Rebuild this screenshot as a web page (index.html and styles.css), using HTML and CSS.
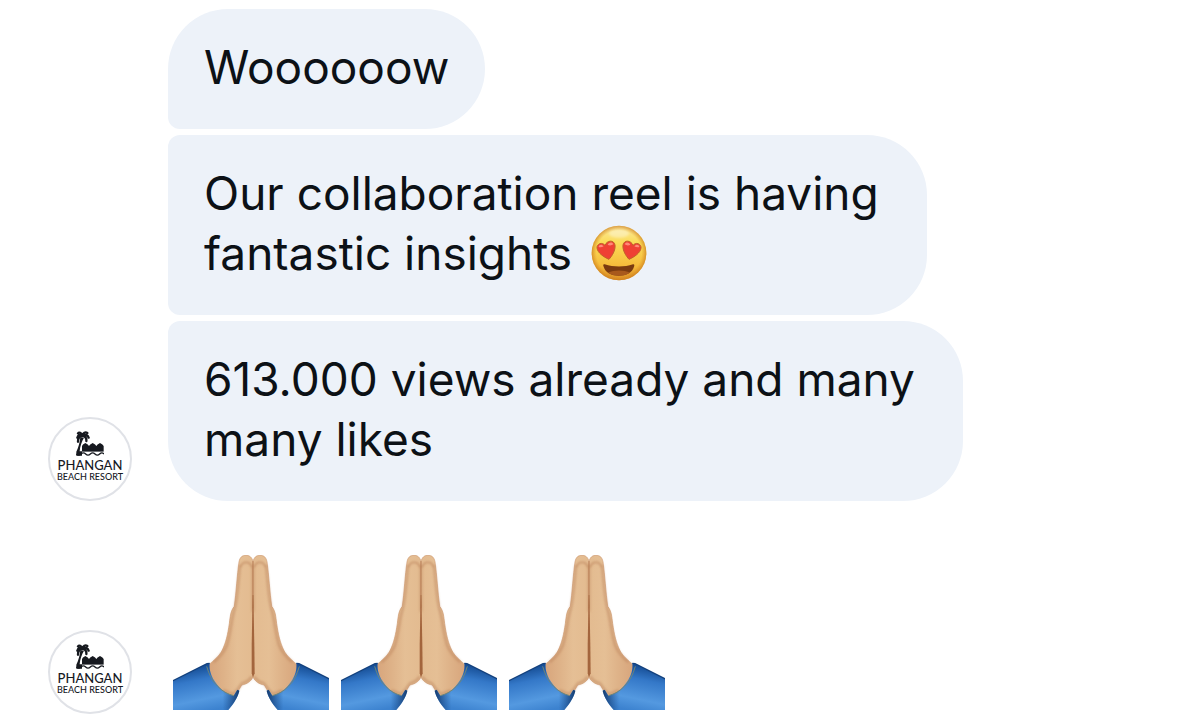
FILE: index.html
```html
<!DOCTYPE html>
<html lang="en">
<head>
  <meta charset="UTF-8">
  <meta name="viewport" content="width=device-width, initial-scale=1">
  <title>Phangan Beach Resort</title>
  <link rel="stylesheet" href="styles.css">
</head>
<body>

<svg class="defs" aria-hidden="true">
  <defs>
    <linearGradient id="face" x1="0" y1="0" x2="0" y2="1">
      <stop offset="0" stop-color="#fbe9a0"></stop>
      <stop offset=".3" stop-color="#fbdc59"></stop>
      <stop offset=".72" stop-color="#f6bd3c"></stop>
      <stop offset="1" stop-color="#dc9026"></stop>
    </linearGradient>
    <radialGradient id="rim">
      <stop offset=".82" stop-color="#d98a20" stop-opacity="0"></stop>
      <stop offset="1" stop-color="#c97a1c" stop-opacity=".7"></stop>
    </radialGradient>
    <linearGradient id="skin" x1="0" y1="0" x2="1" y2="0">
      <stop offset="0" stop-color="#d7a47b"></stop>
      <stop offset=".35" stop-color="#deb288"></stop>
      <stop offset=".65" stop-color="#e5bf95"></stop>
      <stop offset="1" stop-color="#e3bb90"></stop>
    </linearGradient>
    <linearGradient id="sleeve" x1=".3" y1="0" x2=".6" y2="1">
      <stop offset=".1" stop-color="#174f97"></stop>
      <stop offset=".35" stop-color="#3478c8"></stop>
      <stop offset=".75" stop-color="#5499e0"></stop>
      <stop offset="1" stop-color="#3c82cf"></stop>
    </linearGradient>
    <linearGradient id="cuff" x1="0" y1="0" x2="1" y2="0">
      <stop offset=".75" stop-color="#123f7c" stop-opacity="0"></stop>
      <stop offset="1" stop-color="#0d2f60" stop-opacity=".9"></stop>
    </linearGradient>
    <filter id="soft" x="-50%" y="-50%" width="200%" height="200%">
      <feGaussianBlur stdDeviation="3"></feGaussianBlur>
    </filter>

    <g id="hand">
      <path fill="url(#skin)" stroke="#cf9c72" stroke-width="2" d="M264 50C261 36 253 31 243 31C231 31 225 37 222 50C216 93 214 140 208 184C196 199 196 213 193 236C188 270 183 291 172 315C163 333 150 343 128 362L136 395L172 441L205 454L222 434L230 420C246 417 257 410 264 396Z"></path>
      <g fill="none" stroke="#b97f56" filter="url(#soft)">
        <path stroke-width="5" stroke-opacity=".6" d="M227 66C231 48 256 46 261 68"></path>
        <path stroke-width="8" stroke-opacity=".45" d="M225 60C219 120 217 160 209 192C199 220 198 260 186 300C178 322 164 336 146 352"></path>
        <path stroke-width="8" stroke-opacity=".45" d="M175 436L205 448L220 430L231 415C246 411 255 404 260 394"></path>
        <path stroke-width="4" stroke-opacity=".5" d="M262 60V200"></path>
      </g>
      <g id="arm">
        <path fill="url(#sleeve)" d="M24 407L126 356L134 355C132 374 138 396 155 417C169 436 186 447 206 452L217 434L223 437C219 455 209 472 190 495H24Z"></path>
        <path fill="url(#cuff)" d="M24 407L126 356L134 355C132 374 138 396 155 417C169 436 186 447 206 452L217 434L223 437C219 455 209 472 190 495H24Z"></path>
      </g>
      <path fill="none" stroke="#12407d" stroke-width="4" d="M24 407L126 356L134 355"></path>
      <path fill="none" stroke="#6f8577" stroke-width="3" d="M125 364C132 390 143 409 158 424C171 438 187 447 206 452"></path>
    </g>

    <symbol id="pray" viewBox="24 30 468 465">
      <use href="#hand"></use>
      <use href="#hand" transform="matrix(-1 0 0 1 528 0)"></use>
      <path fill="none" stroke="#aa7048" stroke-width="3" stroke-opacity=".6" d="M264 48V190"></path>
      <path fill="#a3653d" d="M263 150L260 300L260 385L264 397L269 385L268 300L265 150Z"></path>
    </symbol>

    <symbol id="logo" viewBox="0 0 84 75">
      <path fill="#16191f" d="M13 18C12 34 7 50 1 62V74H18V61H11C12 46 17 32 24 20Z"></path>
      <path fill="none" stroke="#16191f" stroke-width="7" stroke-linecap="round" d="M19 14C13 9 6 12 4 20M19 14C11 15 6 22 6 32M19 14C16 5 9 3 6 7M19 14C21 5 28 2 34 6M19 14C28 9 36 12 38 20M19 14C28 16 32 22 31 30"></path>
      <path fill="#16191f" d="M18 62V45Q19 40 28 36Q37 40 39 45Q41 40 50 36Q59 40 61 45Q63 40 72 36Q81 40 83 45V62Z"></path>
      <path fill="none" stroke="#fff" stroke-width="3" d="M18 64H84"></path>
      <path fill="none" stroke="#16191f" stroke-width="4" d="M1 69Q8 76 15 69T29 69T43 69T57 69T71 69T84 69"></path>
    </symbol>
  </defs>
</svg>

<main class="chat">
  <section class="group">
    <div class="avatar">
      <svg class="logo" aria-hidden="true"><use href="#logo"></use></svg>
      <span class="name">PHANGAN</span>
      <span class="sub">BEACH RESORT</span>
    </div>
    <div class="messages">
      <p class="bubble first">Woooooow</p>
      <p class="bubble wrapped">Our collaboration reel is having<br>fantastic insights
        <svg class="emoji" viewBox="0 0 168 168" role="img" aria-label="Smiling face with heart eyes">
          <circle cx="84" cy="84" r="82" fill="url(#face)"></circle>
          <circle cx="84" cy="84" r="82" fill="url(#rim)"></circle>
          <ellipse cx="84" cy="26" rx="30" ry="12" fill="#fff" fill-opacity=".35" filter="url(#soft)"></ellipse>
          <g id="heart">
            <path fill="#ef4034" stroke="#c0602a" stroke-width="3" d="M54 103C38 96 20 84 18 69C17 56 34 50 42 61C48 45 69 44 72 60C74 76 63 93 54 103Z"></path>
            <path fill="#ff8a78" d="M23 66C24 58 33 57 38 64C33 67 27 67 23 66ZM50 59C54 51 64 50 67 58C62 62 54 62 50 59Z"></path>
          </g>
          <use href="#heart" transform="matrix(-1 0 0 1 168 0)"></use>
          <path fill="#7a3b10" d="M41 118C68 127 100 127 126 118C130 117 131 120 129 125C120 161 47 161 38 125C36 120 36 117 41 118Z"></path>
          <path fill="#a8591c" d="M51 143C70 134 98 134 117 143C102 155 67 155 51 143Z"></path>
        </svg>
      </p>
      <p class="bubble wrapped last">613.000 views already and many<br>many likes</p>
    </div>
  </section>

  <section class="group">
    <div class="avatar">
      <svg class="logo" aria-hidden="true"><use href="#logo"></use></svg>
      <span class="name">PHANGAN</span>
      <span class="sub">BEACH RESORT</span>
    </div>
    <div class="hands">
      <svg class="pray" role="img" aria-label="Folded hands"><use href="#pray"></use></svg>
      <svg class="pray" role="img" aria-label="Folded hands"><use href="#pray"></use></svg>
      <svg class="pray" role="img" aria-label="Folded hands"><use href="#pray"></use></svg>
    </div>
  </section>
</main>

</body>
</html>
```

FILE: styles.css
```css
* {
  box-sizing: border-box;
  margin: 0;
  padding: 0;
}

body {
  background: #fff;
  color: #0c1116;
  font-family: Inter, "Liberation Sans", sans-serif;
}

.defs {
  display: block;
  width: 0;
  height: 0;
}

.chat {
  display: flex;
  flex-direction: column;
  gap: 54px;
  padding: 9px 48px 8px;
}

.group {
  display: flex;
  align-items: flex-end;
  gap: 36px;
}

.avatar {
  display: flex;
  flex: none;
  flex-direction: column;
  align-items: center;
  width: 84px;
  height: 84px;
  padding-top: 12px;
  border: 2px solid #e0e2e7;
  border-radius: 50%;
  color: #16191f;
  font-family: Lato, sans-serif;
  white-space: nowrap;
}

.logo {
  width: 28px;
  height: 25px;
  margin-bottom: 3px;
}

.name {
  font-size: 13px;
  font-weight: 500;
  line-height: 13px;
}

.sub {
  font-size: 9px;
  font-weight: 500;
  line-height: 9px;
}

.messages {
  display: flex;
  flex-direction: column;
  align-items: flex-start;
  gap: 6px;
}

.bubble {
  padding: 28px 36px 32px;
  border-radius: 12px 60px 60px 12px;
  background: #edf2f9;
  font-size: 46px;
  line-height: 60px;
}

.wrapped {
  padding-right: 48px;
}

.first {
  border-top-left-radius: 60px;
}

.last {
  border-bottom-left-radius: 60px;
}

.emoji {
  width: 56px;
  height: 56px;
  margin-left: 6px;
  vertical-align: -11px;
}

.hands {
  display: flex;
  gap: 12px;
  padding: 0 0 4px 5px;
}

.pray {
  width: 156px;
  height: 155px;
}
```
